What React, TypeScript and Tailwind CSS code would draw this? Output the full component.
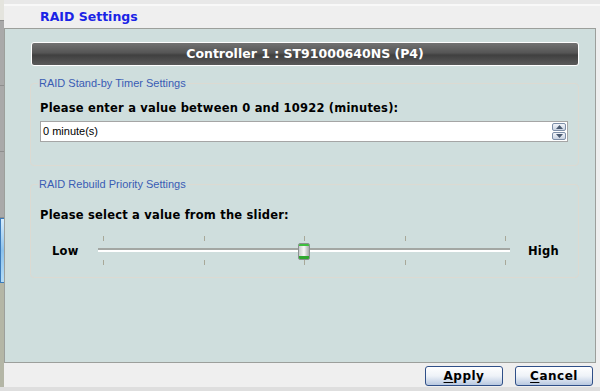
import React from "react";

const ticks = [0, 1, 2, 3, 4];

function Tick() {
  return <div className="h-[5px] w-px bg-[#a8a898]" />;
}

function Spinner() {
  return (
    <div className="flex flex-col gap-px">
      <div className="flex h-[8px] w-[14px] items-center justify-center rounded-[2px] border border-[#7d8fa8] bg-gradient-to-b from-[#f2f5fa] to-[#c9d3e2]">
        <svg width="7" height="4" viewBox="0 0 7 4">
          <path d="M0 4 L3.5 0 L7 4 Z" fill="#4a5a72" />
        </svg>
      </div>
      <div className="flex h-[8px] w-[14px] items-center justify-center rounded-[2px] border border-[#7d8fa8] bg-gradient-to-b from-[#f2f5fa] to-[#c9d3e2]">
        <svg width="7" height="4" viewBox="0 0 7 4">
          <path d="M0 0 L3.5 4 L7 0 Z" fill="#4a5a72" />
        </svg>
      </div>
    </div>
  );
}

function Slider() {
  return (
    <div className="relative h-[30px] w-[412px]">
      <div className="flex justify-between pl-[5px] pr-[4px]">
        {ticks.map((t) => (
          <Tick key={t} />
        ))}
      </div>
      <div className="mt-[7px] h-[4px] border-t-2 border-[#a3a7a3] bg-white" />
      <div className="mt-[8px] flex justify-between pl-[5px] pr-[4px]">
        {ticks.map((t) => (
          <Tick key={t} />
        ))}
      </div>
      {/* thumb */}
      <div className="absolute left-[200px] top-[7px] h-[17px] w-[12px] overflow-hidden rounded-[2px] border border-[#8a9090] bg-gradient-to-r from-[#c8cccc] via-[#f8f8f8] to-[#a8acac]">
        <div className="h-[2px] bg-[#3fbf3f]" />
        <div className="mt-[10px] h-[3px] bg-[#2fa82f]" />
      </div>
    </div>
  );
}

function Button({ letter, rest }: { letter: string; rest: string }) {
  return (
    <button className="flex h-[20px] w-[78px] items-center justify-center rounded-[3px] border border-[#2f4f88] bg-gradient-to-b from-white via-[#eef2f8] to-[#b8c8e0] text-[12px] font-bold tracking-[0.5px] text-black">
      <span className="underline underline-offset-2">{letter}</span>
      {rest}
    </button>
  );
}

const legendFont = { fontFamily: '"Liberation Sans", Arial, sans-serif' };

export default function App() {
  return (
    <div
      className="flex h-[391px] w-[600px] overflow-hidden bg-[#efefef]"
      style={{ fontFamily: '"DejaVu Sans", Verdana, sans-serif' }}
    >
      {/* left tab strip */}
      <div className="flex w-[4px] flex-col">
        <div className="h-[20px] bg-[#e4e4de]" />
        <div className="h-[66px] border-y border-[#8e8e8e] bg-[#a9a9a9]" />
        <div className="h-[66px] border-b border-[#8e8e8e] bg-[#a9a9a9]" />
        <div className="h-[66px] border-b border-[#8e8e8e] bg-[#a9a9a9]" />
        <div className="h-[65px] w-[5px] border border-[#3c7cbc] bg-gradient-to-b from-[#d6ecfb] via-[#8cc2ec] to-[#b4dcf6]" />
        <div className="flex-1 bg-[#b4b6a6]" />
        <div className="h-[4px] bg-[#dedede]" />
      </div>

      {/* main column */}
      <div className="flex flex-1 flex-col">
        <div className="h-[28px] border-t-[4px] border-[#e8e8e8]">
          <div className="h-[2px] bg-[#f8f8f8]" />
          <div className="pl-[36px] pt-[3px] text-[12.5px] font-bold leading-[16px] text-[#1a24e6]">
            RAID Settings
          </div>
        </div>

        <div className="mr-[4px] flex h-[335px] flex-col border border-[#9c9f9b] bg-[#cfdedd] pl-[26px] pr-[16px] pt-[13px]">
          <div className="flex h-[24px] items-center justify-center rounded-[3px] border border-white bg-[linear-gradient(#727272,#555_45%,#404040_55%,#5a5a5a)] text-[12.5px] font-bold text-white">
            Controller 1 : ST91000640NS (P4)
          </div>

          <fieldset className="-ml-px mt-[10px] rounded-[4px] border border-[#dcdad2] pb-[23px] pl-[9px] pr-[10px]">
            <legend className="-ml-[2px] px-[1px] text-[11px] leading-[14px] text-[#3a5cb4]" style={legendFont}>
              RAID Stand-by Timer Settings
            </legend>
            <div className="mt-[10px] text-[11.5px] font-bold leading-[16px] tracking-[0.2px] text-black">
              Please enter a value between 0 and 10922 (minutes):
            </div>
            <div className="mt-[5px] flex h-[21px] items-center justify-between border border-[#a5a5a5] bg-white pl-[2px] pr-[1px]">
              <span className="text-[11px] text-black" style={legendFont}>
                0 minute(s)
              </span>
              <Spinner />
            </div>
          </fieldset>

          <fieldset className="-ml-px mt-[11px] rounded-[4px] border border-[#dcdad2] pb-[11px] pl-[9px] pr-[10px]">
            <legend className="-ml-[2px] px-[1px] text-[11px] leading-[14px] text-[#3a5cb4]" style={legendFont}>
              RAID Rebuild Priority Settings
            </legend>
            <div className="mt-[16px] text-[11.5px] font-bold leading-[16px] tracking-[0.2px] text-black">
              Please select a value from the slider:
            </div>
            <div className="mt-[13px] flex items-center">
              <span className="ml-[12px] w-[46px] pt-[2px] text-[11.5px] font-bold tracking-[0.2px] text-black">
                Low
              </span>
              <Slider />
              <span className="ml-[18px] pt-[2px] text-[11.5px] font-bold tracking-[0.2px] text-black">
                High
              </span>
            </div>
          </fieldset>
        </div>

        <div className="flex h-[24px] items-center justify-end gap-[12px] pr-[7px] pt-[2px]">
          <Button letter="A" rest="pply" />
          <Button letter="C" rest="ancel" />
        </div>
        <div className="h-[4px] bg-[#dedede]" />
      </div>
    </div>
  );
}
